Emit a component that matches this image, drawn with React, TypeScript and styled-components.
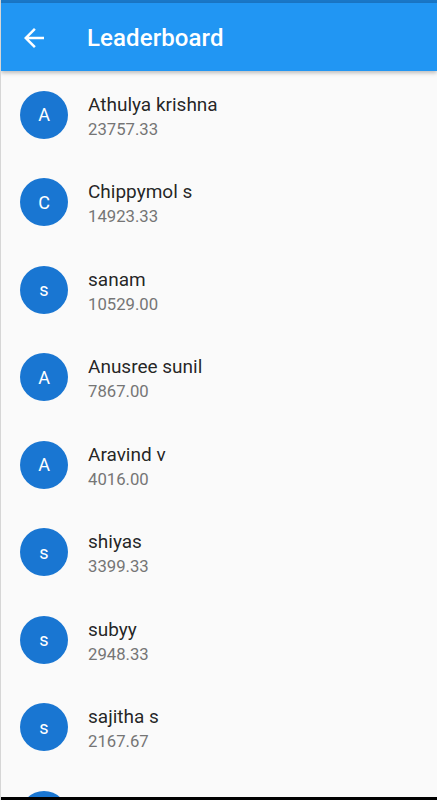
import React from "react";
import styled, { createGlobalStyle } from "styled-components";

const Global = createGlobalStyle`
  html, body { margin: 0; padding: 0; background: #fafafa; }
  body { font-family: Roboto, "Noto Sans", sans-serif; overflow: hidden; }
`;

const Screen = styled.div`
  width: 437px;
  height: 800px;
  display: flex;
  flex-direction: column;
  background: #fafafa;
  border-left: 1px solid #d6d6d6;
  box-sizing: border-box;
  overflow: hidden;
  position: relative;
`;

const StatusStrip = styled.div`
  height: 3px;
  background: #1a78c8;
  flex: none;
`;

const AppBar = styled.header`
  height: 68px;
  flex: none;
  background: #2196f3;
  display: flex;
  align-items: center;
  box-shadow: 0 2px 4px rgba(0, 0, 0, 0.25);
  position: relative;
  z-index: 2;
`;

const BackButton = styled.button`
  width: 87px;
  height: 100%;
  padding: 2px 0 0 19px;
  border: none;
  background: transparent;
  display: flex;
  align-items: center;
  justify-content: flex-start;
  flex: none;
  margin-left: -1px;
`;

const Title = styled.h1`
  margin: 0;
  padding-top: 2px;
  color: #ffffff;
  font-family: Roboto, sans-serif;
  font-weight: 500;
  font-size: 24px;
  letter-spacing: 0.1px;
`;

const List = styled.div`
  display: flex;
  flex-direction: column;
  flex: none;
`;

const Row = styled.div`
  height: 87.5px;
  flex: none;
  display: flex;
  align-items: center;
  padding-left: 19px;
`;

const Avatar = styled.div`
  width: 48px;
  height: 48px;
  border-radius: 50%;
  background: #1976d2;
  color: #ffffff;
  display: flex;
  align-items: center;
  justify-content: center;
  font-size: 18px;
  flex: none;
`;

const Texts = styled.div`
  display: flex;
  flex-direction: column;
  margin-left: 20px;
  padding-top: 6px;
`;

const Name = styled.div`
  font-size: 19px;
  color: rgba(0, 0, 0, 0.87);
  line-height: 24px;
`;

const Score = styled.div`
  font-size: 16.7px;
  color: #757575;
  line-height: 26px;
`;

const NavBar = styled.div`
  position: absolute;
  left: -1px;
  right: 0;
  bottom: 0;
  height: 3px;
  background: #000;
  z-index: 3;
`;

const data: [string, string][] = [
  ["Athulya krishna", "23757.33"],
  ["Chippymol s", "14923.33"],
  ["sanam", "10529.00"],
  ["Anusree sunil", "7867.00"],
  ["Aravind v", "4016.00"],
  ["shiyas", "3399.33"],
  ["subyy", "2948.33"],
  ["sajitha s", "2167.67"],
  ["sruthi", "1890.00"],
];

export default function App() {
  return (
    <>
      <Global />
      <Screen>
        <StatusStrip />
        <AppBar>
          <BackButton aria-label="Back">
            <svg width="30" height="30" viewBox="0 0 24 24">
              <path
                d="M20 11H7.83l5.59-5.59L12 4l-8 8 8 8 1.41-1.41L7.83 13H20v-2z"
                fill="#fff"
              />
            </svg>
          </BackButton>
          <Title>Leaderboard</Title>
        </AppBar>
        <List>
          {data.map(([name, score]) => (
            <Row key={name}>
              <Avatar>{name[0]}</Avatar>
              <Texts>
                <Name>{name}</Name>
                <Score>{score}</Score>
              </Texts>
            </Row>
          ))}
        </List>
        <NavBar />
      </Screen>
    </>
  );
}
